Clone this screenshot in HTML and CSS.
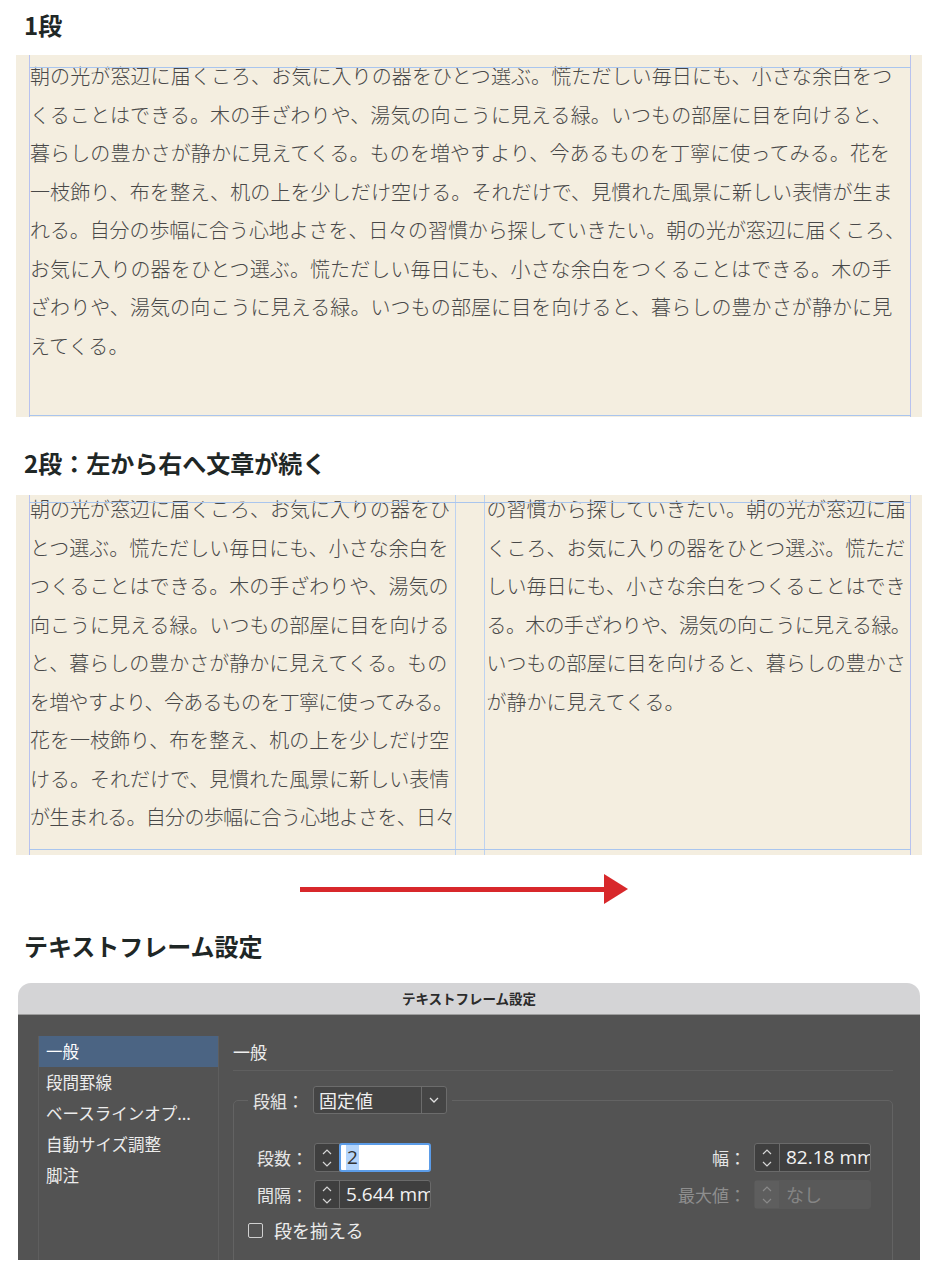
FILE: index.html
```html
<!DOCTYPE html>
<html lang="ja">
<head>
  <meta charset="UTF-8">
  <meta name="viewport" content="width=device-width, initial-scale=1.0">
  <title>段組とテキストフレーム設定</title>
  <link rel="stylesheet" href="styles.css">
</head>
<body>
  <h2 class="section-title first">1段</h2>

  <!-- one column frame -->
  <div class="page one-col">
    <div class="col">
      <p class="copy">
        朝の光が窓辺に届くころ、お気に入りの器をひとつ選ぶ。慌ただしい毎日にも、小さな余白をつ<br>
        くることはできる。木の手ざわりや、湯気の向こうに見える緑。いつもの部屋に目を向けると、<br>
        暮らしの豊かさが静かに見えてくる。ものを増やすより、今あるものを丁寧に使ってみる。花を<br>
        一枝飾り、布を整え、机の上を少しだけ空ける。それだけで、見慣れた風景に新しい表情が生ま<br>
        <span class="tight">れる。自分の歩幅に合う心地よさを、日々の習慣から探していきたい。朝の光が窓辺に届くころ、</span><br>
        お気に入りの器をひとつ選ぶ。慌ただしい毎日にも、小さな余白をつくることはできる。木の手<br>
        ざわりや、湯気の向こうに見える緑。いつもの部屋に目を向けると、暮らしの豊かさが静かに見<br>
        えてくる。
      </p>
    </div>
  </div>

  <h2 class="section-title">2段：左から右へ文章が続く</h2>

  <!-- two column frame, text flows left to right -->
  <div class="page two-col">
    <div class="col">
      <p class="copy">
        朝の光が窓辺に届くころ、お気に入りの器をひ<br>
        とつ選ぶ。慌ただしい毎日にも、小さな余白を<br>
        つくることはできる。木の手ざわりや、湯気の<br>
        向こうに見える緑。いつもの部屋に目を向ける<br>
        と、暮らしの豊かさが静かに見えてくる。もの<br>
        <span class="tight">を増やすより、今あるものを丁寧に使ってみる。</span><br>
        花を一枝飾り、布を整え、机の上を少しだけ空<br>
        ける。それだけで、見慣れた風景に新しい表情<br>
        <span class="tight">が生まれる。自分の歩幅に合う心地よさを、日々</span>
      </p>
    </div>
    <div class="col">
      <p class="copy">
        の習慣から探していきたい。朝の光が窓辺に届<br>
        くころ、お気に入りの器をひとつ選ぶ。慌ただ<br>
        しい毎日にも、小さな余白をつくることはでき<br>
        <span class="tight">る。木の手ざわりや、湯気の向こうに見える緑。</span><br>
        いつもの部屋に目を向けると、暮らしの豊かさ<br>
        が静かに見えてくる。
      </p>
    </div>
  </div>

  <div class="arrow">
    <svg width="328" height="30" viewBox="0 0 328 30">
      <rect x="0" y="13" width="306" height="5" fill="#d8282b"/>
      <polygon points="304,0 328,15 304,30" fill="#d8282b"/>
    </svg>
  </div>

  <h2 class="section-title">テキストフレーム設定</h2>

  <div class="dialog">
    <div class="titlebar">テキストフレーム設定</div>
    <div class="dialog-body">
      <ul class="side-nav">
        <li class="active">一般</li>
        <li>段間罫線</li>
        <li>ベースラインオプ...</li>
        <li>自動サイズ調整</li>
        <li>脚注</li>
      </ul>

      <div class="pane">
        <div class="pane-title">一般</div>

        <div class="group">
          <div class="group-head">
            <span class="label">段組：</span>
            <div class="select">
              <span class="select-value">固定値</span>
              <span class="select-btn">
                <svg width="10" height="6" viewBox="0 0 10 6"><path d="M1 1 L5 5 L9 1" fill="none" stroke="#e0e0e0" stroke-width="1.3"/></svg>
              </span>
            </div>
          </div>

          <div class="group-body">
            <div class="fields left">
              <span class="label">段数：</span>
              <div class="stepper">
                <span class="spin">
                  <svg width="12" height="22" viewBox="0 0 12 22"><path d="M2 7 L6 3 L10 7 M2 15 L6 19 L10 15" fill="none" stroke="#d6d6d6" stroke-width="1.2"/></svg>
                </span>
                <span class="value focus"><span class="sel">2</span></span>
              </div>
              <span class="label">間隔：</span>
              <div class="stepper">
                <span class="spin">
                  <svg width="12" height="22" viewBox="0 0 12 22"><path d="M2 7 L6 3 L10 7 M2 15 L6 19 L10 15" fill="none" stroke="#d6d6d6" stroke-width="1.2"/></svg>
                </span>
                <span class="value">5.644 mm</span>
              </div>
            </div>

            <div class="fields right">
              <span class="label">幅：</span>
              <div class="stepper">
                <span class="spin">
                  <svg width="12" height="22" viewBox="0 0 12 22"><path d="M2 7 L6 3 L10 7 M2 15 L6 19 L10 15" fill="none" stroke="#d6d6d6" stroke-width="1.2"/></svg>
                </span>
                <span class="value">82.18 mm</span>
              </div>
              <span class="label muted">最大値：</span>
              <div class="stepper disabled">
                <span class="spin">
                  <svg width="12" height="22" viewBox="0 0 12 22"><path d="M2 7 L6 3 L10 7 M2 15 L6 19 L10 15" fill="none" stroke="#8a8a8a" stroke-width="1.2"/></svg>
                </span>
                <span class="value">なし</span>
              </div>
            </div>
          </div>

          <label class="check"><span class="box"></span>段を揃える</label>
        </div>
      </div>
    </div>
  </div>
</body>
</html>
```

FILE: styles.css
```css
/* Reset */
* {
  margin: 0;
  padding: 0;
  box-sizing: border-box;
}

body {
  font-family: "Noto Sans CJK JP", "Noto Sans", sans-serif;
  background-color: #fff;
  padding: 10px 16px 0;
  width: 938px;
}

/* Section headings */
.section-title {
  font-size: 24px;
  line-height: 30px;
  font-weight: 700;
  color: #1f2726;
  padding-left: 8px;
  margin-top: 31px;
  margin-bottom: 17px;
}

.section-title.first {
  margin-top: 0;
  margin-bottom: 15px;
}

/* Document page with frame guides */
.page {
  position: relative;
  display: grid;
  background-color: #f4eee0;
  padding: 0 11px 0 13px;
}

.page::before,
.page::after {
  content: "";
  position: absolute;
  left: 13px;
  right: 11px;
  height: 1px;
  background-color: #a9c5ee;
}

.one-col {
  height: 362px;
  grid-template-columns: 1fr;
}

.one-col::before { top: 12px; }
.one-col::after { bottom: 1px; }

.two-col {
  height: 360px;
  grid-template-columns: 1fr 1fr;
  column-gap: 28px;
}

.two-col::before { top: 7px; }
.two-col::after { bottom: 5px; }

.col {
  border-left: 1px solid #b8c2ef;
  border-right: 1px solid #b8c2ef;
}

.two-col .col {
  border-color: #bdd2f0;
}

.two-col .col:first-child {
  border-left-color: #b8c2ef;
}

.two-col .col:last-child {
  border-right-color: #b8c2ef;
  padding-left: 2px;
}

.copy {
  font-size: 20px;
  line-height: 38.5px;
  font-weight: 300;
  color: #484848;
  white-space: nowrap;
}

.one-col .copy {
  padding-top: 2px;
  letter-spacing: 0.1px;
}

.two-col .copy {
  margin-top: -5px;
}

.tight {
  letter-spacing: -0.7px;
}

.one-col .tight {
  letter-spacing: -0.1px;
}

/* Flow arrow */
.arrow {
  margin-top: 19px;
  padding-left: 284px;
  height: 30px;
}

.arrow svg {
  display: block;
}

.arrow + .section-title {
  margin-top: 27px;
  margin-bottom: 22px;
}

/* Dialog */
.dialog {
  margin: 0 2px;
}

.titlebar {
  height: 32px;
  line-height: 31px;
  background-color: #d4d4d6;
  border-radius: 13px 13px 0 0;
  border-bottom: 1px solid #9d9d9d;
  text-align: center;
  font-size: 13.5px;
  font-weight: 700;
  color: #2b2b2b;
}

.dialog-body {
  display: flex;
  height: 245px;
  overflow: hidden;
  background-color: #535353;
  padding: 21px 27px 0 20px;
}

.side-nav {
  list-style: none;
  width: 181px;
  flex-shrink: 0;
  border-left: 1px solid #5e5e5e;
  border-right: 1px solid #5e5e5e;
}

.side-nav li {
  height: 31px;
  line-height: 31px;
  padding-left: 7px;
  font-size: 16.5px;
  color: #ececec;
  white-space: nowrap;
}

.side-nav li.active {
  background-color: #4b6483;
  color: #fff;
}

.pane {
  flex: 1;
  margin-left: 14px;
}

.pane-title {
  height: 35px;
  line-height: 31px;
  font-size: 17px;
  color: #efefef;
  border-bottom: 1px solid #5f5f5f;
}

.group {
  margin-top: 29px;
  height: 220px;
  border: 1px solid #636363;
  border-radius: 5px;
  padding: 0 21px 0 14px;
}

.group-head {
  display: flex;
  align-items: center;
  gap: 9px;
  width: max-content;
  margin-top: -15px;
  padding: 0 5px;
  background-color: #535353;
}

.label {
  font-size: 17px;
  color: #e6e6e6;
  justify-self: end;
  white-space: nowrap;
}

.label.muted {
  color: #8e8e8e;
}

.select {
  display: flex;
  width: 134px;
  height: 28px;
  border: 1px solid #6c6c6c;
  border-radius: 3px;
  background-color: #454545;
}

.select-value {
  flex: 1;
  padding-left: 5px;
  font-size: 18px;
  line-height: 26px;
  color: #f0f0f0;
}

.select-btn {
  width: 25px;
  display: flex;
  align-items: center;
  justify-content: center;
  border-left: 1px solid #6c6c6c;
}

.group-body {
  display: flex;
  justify-content: space-between;
  padding-top: 29px;
}

.fields {
  display: grid;
  grid-template-columns: auto auto;
  column-gap: 6px;
  row-gap: 8px;
  align-items: center;
}

.fields.left {
  margin-left: 9px;
}

.fields.right {
  column-gap: 8px;
}

.stepper {
  display: flex;
  width: 117px;
  height: 29px;
  border: 1px solid #6a6a6a;
  border-radius: 3px;
  background-color: #3f3f3f;
}

.spin {
  width: 25px;
  flex-shrink: 0;
  display: flex;
  align-items: center;
  justify-content: center;
  border-right: 1px solid #6a6a6a;
}

.value {
  flex: 1;
  padding-left: 6px;
  font-family: "Open Sans", "Noto Sans CJK JP", sans-serif;
  font-size: 19px;
  line-height: 27px;
  color: #f2f2f2;
  white-space: nowrap;
  overflow: hidden;
}

.value.focus {
  background-color: #fff;
  color: #333;
  outline: 2px solid #5b9ce8;
  outline-offset: -1px;
  border-radius: 2px;
}

.sel {
  background-color: #b4d5fc;
  padding: 0 1px;
}

.stepper.disabled {
  background-color: #595959;
  border-color: #595959;
}

.stepper.disabled .spin {
  background-color: #5e5e5e;
  border-right-color: #595959;
}

.stepper.disabled .value {
  font-family: "Noto Sans CJK JP", sans-serif;
  font-size: 18px;
  color: #858585;
}

/* Checkbox */
.check {
  display: flex;
  align-items: center;
  gap: 11px;
  margin-top: 10px;
  height: 22px;
  font-size: 18px;
  color: #ededed;
}

.box {
  width: 15px;
  height: 15px;
  border: 1.5px solid #d0d0d0;
  border-radius: 2px;
}
```
